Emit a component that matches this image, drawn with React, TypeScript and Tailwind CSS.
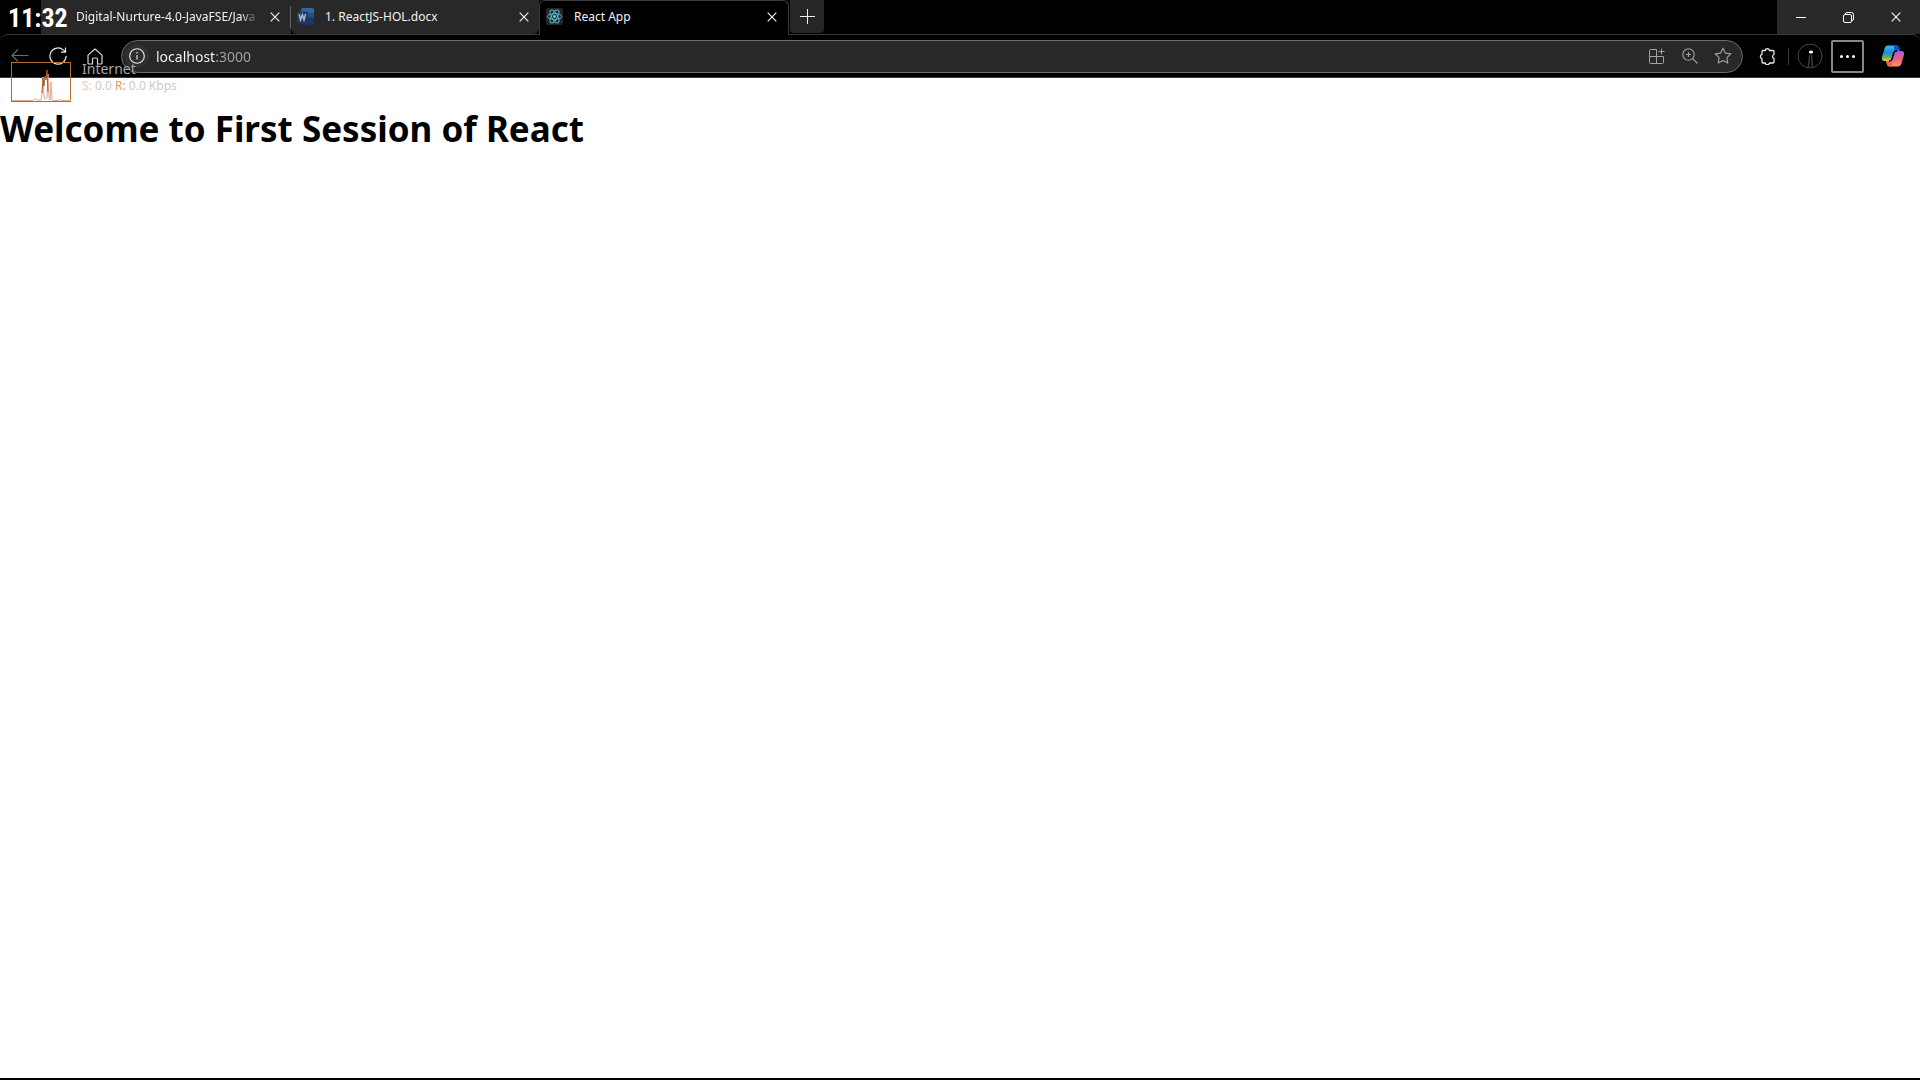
import type { ReactNode } from "react";

function CloseIcon() {
  return (
    <svg viewBox="0 0 10 10" className="size-[10px]" fill="none" stroke="#f0f0f0" strokeWidth="1.2">
      <path d="M.7.7l8.6 8.6M9.3.7L.7 9.3" />
    </svg>
  );
}

function WordIcon() {
  return (
    <svg viewBox="0 0 18 18" className="size-[18px]">
      <rect x="4" y="0" width="13" height="17" rx="1.5" fill="#1d3563" />
      <path d="M5.5 0h10A1.5 1.5 0 0 1 17 1.500V5H4V1.500A1.500 1.500 0 0 1 5.500 0z" fill="#32699c" />
      <rect x="4" y="5" width="13" height="4.500" fill="#264f89" />
      <rect x="0" y="3.500" width="11" height="11" rx="1" fill="#1c3c70" />
      <path d="M2.100 6l1.500 6L5.400 6.500 7 12l1.600-6" fill="none" stroke="#b4bcc8" strokeWidth="1.400" />
    </svg>
  );
}

function ReactIcon() {
  return (
    <svg viewBox="0 0 18 18" className="size-[18px]" fill="none" stroke="#58b6cf" strokeWidth="1">
      <rect width="17" height="17" rx="2" fill="#242628" stroke="none" />
      <ellipse cx="8.500" cy="8.500" rx="7.200" ry="2.900" />
      <ellipse cx="8.500" cy="8.500" rx="7.200" ry="2.900" transform="rotate(60 8.500 8.500)" />
      <ellipse cx="8.500" cy="8.500" rx="7.200" ry="2.900" transform="rotate(120 8.500 8.500)" />
      <circle cx="8.500" cy="8.500" r="1.400" fill="#6fd4ee" stroke="none" />
    </svg>
  );
}

function Tab({ icon, title, active }: { icon: ReactNode; title: string; active?: boolean }) {
  return (
    <div
      className={
        active
          ? "relative z-10 flex h-[35px] w-[250px] shrink-0 items-center rounded-t-md border border-b-0 border-[#3a3a3a] bg-black pr-2 pb-[2px] pl-[6px]"
          : "flex h-[34px] w-[248px] shrink-0 items-center rounded-b-md bg-[#282828] pr-[7px] pl-[6px]"
      }
    >
      <button className="flex min-w-0 flex-1 items-center gap-[10px] text-left">
        <span className="size-[18px] shrink-0">{icon}</span>
        <span className="overflow-hidden text-[12px] leading-[16px] whitespace-nowrap text-[#f2f2f2]">{title}</span>
      </button>
      <button aria-label={`Close ${title}`} className="ml-2 flex size-4 shrink-0 items-center justify-center">
        <CloseIcon />
      </button>
    </div>
  );
}

function TabStrip() {
  return (
    <div className="flex h-[34px] items-start bg-black">
      <div className="flex h-[34px] w-[290px] items-center bg-linear-to-r from-black from-[41px] to-[#282828] to-[41px] pr-[7px] pl-[76px]">
        <button className="min-w-0 flex-1 mask-r-from-90% text-left text-[12px] leading-[16px] whitespace-nowrap text-[#f2f2f2]">
          Digital-Nurture-4.0-JavaFSE/Java
        </button>
        <button aria-label="Close Digital-Nurture" className="ml-2 flex size-4 items-center justify-center">
          <CloseIcon />
        </button>
      </div>
      <div className="flex h-[34px] w-px items-center bg-[#282828]">
        <div className="h-[22px] w-px bg-[#666]" />
      </div>
      <Tab icon={<WordIcon />} title="1. ReactJS-HOL.docx" />
      <Tab icon={<ReactIcon />} title="React App" active />
      <button aria-label="New tab" className="ml-px flex h-[33px] w-[34px] items-center justify-center rounded-b-sm bg-[#262626]">
        <svg viewBox="0 0 15 15" className="size-[15px]" stroke="#eee" strokeWidth="1">
          <path d="M7.500 0v15M0 7.500h15" />
        </svg>
      </button>
      <div className="ml-auto flex h-[34px] w-[143px] bg-[#292929]">
        <button aria-label="Minimize" className="flex flex-1 items-center justify-center">
          <span className="h-px w-[10px] bg-white" />
        </button>
        <button aria-label="Restore" className="flex flex-1 items-center justify-center">
          <svg viewBox="0 0 11 11" className="size-[11px]" fill="none" stroke="#fff" strokeWidth="1">
            <rect x=".5" y="2.500" width="8" height="8" rx="1.500" />
            <path d="M2.500 2.300V2A1.500 1.500 0 0 1 4 .5h4.500a2 2 0 0 1 2 2V7A1.500 1.500 0 0 1 9 8.500" />
          </svg>
        </button>
        <button aria-label="Close window" className="flex flex-1 items-center justify-center">
          <CloseIcon />
        </button>
      </div>
    </div>
  );
}

function AddressBar() {
  return (
    <div className="ml-[14px] flex h-[33px] min-w-0 flex-1 items-center rounded-full border border-[#6c6c6c] bg-[#282828] pr-[7px] pl-[3px]">
      <button aria-label="Site information" className="flex size-6 shrink-0 items-center justify-center rounded-full bg-[#303030]">
        <svg viewBox="0 0 16 16" className="size-4" fill="none" stroke="#eee" strokeWidth="1.100">
          <circle cx="8" cy="8" r="7.300" />
          <path d="M8 7v4.500" />
          <circle cx="8" cy="4.800" r=".8" fill="#eee" stroke="none" />
        </svg>
      </button>
      <input
        aria-label="Address"
        defaultValue="localhost:3000"
        className="ml-[7px] min-w-0 flex-1 bg-linear-to-r from-white from-[60px] to-[#a4a4a4] to-[60px] bg-clip-text text-[14px] text-transparent outline-none"
      />
      <div className="flex shrink-0 items-center gap-[9px] text-[#a2a2a2]">
        <button aria-label="Install app" className="flex size-6 items-center justify-center">
          <svg viewBox="0 0 16 16" className="size-4" fill="none" stroke="currentColor" strokeWidth="1">
            <path d="M7.500 1.500h-6a1 1 0 0 0-1 1v12a1 1 0 0 0 1 1h12a1 1 0 0 0 1-1v-6H.5M7.500 1.500v14M12.500 .5v6M9.500 3.500h6" />
          </svg>
        </button>
        <button aria-label="Zoom" className="flex size-6 items-center justify-center">
          <svg viewBox="0 0 16 16" className="size-4" fill="none" stroke="currentColor" strokeWidth="1.100">
            <circle cx="6.500" cy="6.500" r="5.700" />
            <path d="M10.600 10.600l4.900 4.900M6.500 4v5M4 6.500h5" />
          </svg>
        </button>
        <button aria-label="Add to favorites" className="flex size-6 items-center justify-center">
          <svg viewBox="0 0 18 18" className="size-[18px]" fill="none" stroke="currentColor" strokeWidth="1.100" strokeLinejoin="round">
            <path d="M9 1.200l2.400 4.900 5.400.8-3.900 3.800.9 5.400L9 13.600l-4.800 2.500.9-5.400L1.200 6.900l5.400-.8z" />
          </svg>
        </button>
      </div>
    </div>
  );
}

function Toolbar() {
  return (
    <div className="flex h-11 items-center rounded-t-lg border-t border-b border-[#383838] bg-black pr-[15px] pl-[8px]">
      <button aria-label="Back" className="flex size-6 items-center justify-center">
        <svg viewBox="0 0 18 14" className="h-[14px] w-[18px]" fill="none" stroke="#6c6c6c" strokeWidth="1.100">
          <path d="M17.500 6.500H1M7 .5l-6 6 6 6" />
        </svg>
      </button>
      <button aria-label="Refresh" className="ml-[14px] flex size-6 items-center justify-center">
        <svg viewBox="0 0 18 18" className="size-[18px]" fill="none" stroke="#e4e4e4" strokeWidth="1.200">
          <path d="M17.100 9A8.100 8.100 0 1 1 14.500 3.100L16.300 4.800M16.500 .5v4.600h-4.600" />
        </svg>
      </button>
      <button aria-label="Home" className="ml-[13px] flex size-6 items-center justify-center">
        <svg viewBox="0 0 16 17" className="h-[17px] w-4" fill="none" stroke="#d8d8d8" strokeWidth="1.200" strokeLinejoin="round">
          <path d="M1 7.100L8 1l7 6.100V15a1 1 0 0 1-1 1h-3.500v-5a1 1 0 0 0-1-1h-3a1 1 0 0 0-1 1v5H2a1 1 0 0 1-1-1z" />
        </svg>
      </button>
      <AddressBar />
      <button aria-label="Extensions" className="ml-3 flex size-6 items-center justify-center">
        <svg viewBox="0 0 17 17" className="size-[17px]" fill="none" stroke="#e8e8e8" strokeWidth="1.300" strokeLinejoin="round">
          <path d="M4 2.500h2.200a2.200 2.200 0 0 1 4.300 0h3.500a1 1 0 0 1 1 1v3a2.100 2.100 0 0 0 0 4v3.500a1 1 0 0 1-1 1h-3.500a2.200 2.200 0 0 1-4.300 0H4a1 1 0 0 1-1-1v-3.300a2.300 2.300 0 0 1 0-4.400V3.500a1 1 0 0 1 1-1z" />
        </svg>
      </button>
      <div className="ml-[9px] h-[17px] w-px bg-[#3c3c3c]" />
      <button aria-label="Profile" className="ml-2 size-[26px]">
        <svg viewBox="0 0 26 26" className="size-[26px]" fill="none">
          <circle cx="13" cy="13" r="12" stroke="#484848" />
          <path d="M12.500 12l-1 12M14.500 12l1 12" stroke="#3c3c3c" strokeWidth="1.500" />
          <ellipse cx="14" cy="9" rx="2.200" ry="1.600" fill="#fff" />
        </svg>
      </button>
      <button aria-label="Settings and more" className="ml-2 flex size-[33px] items-center justify-center gap-[3px] rounded-xs border-2 border-[#83878f]">
        <span className="size-[3px] rounded-full bg-white" />
        <span className="size-[3px] rounded-full bg-white" />
        <span className="size-[3px] rounded-full bg-white" />
      </button>
      <button aria-label="Copilot" className="ml-[17px] size-[24px]">
        <svg viewBox="0 0 24 24" className="size-6">
          <defs>
            <linearGradient id="cool" x1="0" y1="0" x2="0" y2="1">
              <stop stopColor="#2bc4f2" />
              <stop offset=".45" stopColor="#2386df" />
              <stop offset=".75" stopColor="#54b365" />
              <stop offset="1" stopColor="#f4cb24" />
            </linearGradient>
            <linearGradient id="warm" x1="0" y1="0" x2="0" y2="1">
              <stop stopColor="#a45bed" />
              <stop offset=".5" stopColor="#ef5d83" />
              <stop offset="1" stopColor="#ff9364" />
            </linearGradient>
          </defs>
          <path d="M7 1.500h8.500c1.300 0 2 .8 2.500 2l1 3.500h-3.500c-1.800 0-2.600 1-3 2.500l-1.500 5c-.5 1.700-1.500 2.500-3 2.500H3.500C1.300 17 .5 15.200 1 13L3.600 4.500C4.200 2.500 5.300 1.500 7 1.500z" fill="url(#cool)" />
          <path d="M13 1.500h2.500c1.300 0 2 .8 2.500 2l1 3.500h-3.500c-1 0-1.600.3-2 .8z" fill="#174fc0" />
          <path d="M17 22.500H8.500c-1.300 0-2-.8-2.500-2L5 17h3.500c1.800 0 2.600-1 3-2.500l1.500-5c.5-1.700 1.500-2.500 3-2.500h4.500c2.200 0 3 1.800 2.500 4l-2.600 8.500c-.6 2-1.700 3-3.400 3z" fill="url(#warm)" />
          <path d="M11 22.500H8.500c-1.300 0-2-.8-2.500-2L5 17h3.500c1 0 1.600-.3 2-.8z" fill="#f65a51" />
          <path d="M12.300 9.500c.3-1.500 1-2.300 2-2.500h1.700c-1.700 0-2.500.9-3 2.500l-1.500 5c-.4 1.600-1.200 2.500-3 2.500H8c1.700-.1 2.400-1 2.800-2.500z" fill="#000" stroke="#000" />
        </svg>
      </button>
    </div>
  );
}

function DesktopOverlay() {
  return (
    <>
      <time className="pointer-events-none absolute top-[3px] left-[8px] z-20 font-['Liberation_Sans_Narrow','Roboto_Condensed','Roboto',sans-serif] text-[26px] leading-[30px] font-bold text-white">
        11:32
      </time>
      <section aria-label="Network usage" className="pointer-events-none absolute top-[60px] left-[11px] z-20 flex gap-[11px]">
        <svg viewBox="0 0 60 40" className="mt-[2px] h-[40px] w-[60px]" fill="none">
          <rect x=".5" y=".5" width="59" height="39" stroke="#b66b30" />
          <path d="M1 38.500h21l2-2 2 1.500h4l1-6 1-17 1 19 1 3 2-1 1-24 1 23 1 3 1-18 1 18 3 .5h3l2-1 2 1h11" stroke="#e8a78c" strokeWidth="1" />
          <path d="M31 31l1-15 1 8 1-10 1 4 1-10 1 22" stroke="#a85f29" />
        </svg>
        <div className="flex flex-col">
          <span className="text-[14px] leading-[17px] text-[#a6a6a6]">Internet</span>
          <span className="text-[12px] leading-[17px] text-[#cacaca]">
            <b className="font-normal text-[#f0c8b4]">S:</b> 0.0 <b className="font-normal text-[#df9b62]">R:</b> 0.0 Kbps
          </span>
        </div>
      </section>
    </>
  );
}

export default function App() {
  return (
    <div className="relative flex min-h-screen flex-col border-b-2 border-black bg-white font-['Noto_Sans',sans-serif]">
      <header className="bg-black">
        <TabStrip />
        <Toolbar />
      </header>
      <main className="flex-1 pt-[25px]">
        <h1 className="text-[35px] leading-[52px] font-bold text-black">Welcome to First Session of React</h1>
      </main>
      <DesktopOverlay />
    </div>
  );
}
